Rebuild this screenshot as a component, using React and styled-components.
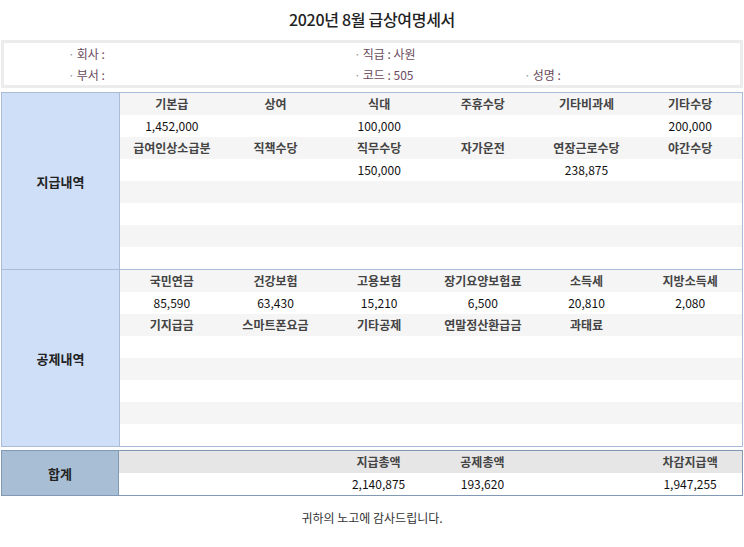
import React from "react";
import styled, { createGlobalStyle } from "styled-components";

const G = createGlobalStyle`
  body{margin:0;background:#fff;font-family:"Noto Sans CJK KR","Noto Sans",sans-serif;font-size:12px;color:#222;}
`;
const Page = styled.div`width:742px;padding:0 0 0 1px;`;
const Title = styled.h1`margin:0;height:40px;line-height:38px;text-align:center;font-size:16px;font-weight:500;color:#222;letter-spacing:-0.3px;`;
const Info = styled.div`border:3px solid #ececec;height:42px;padding:0;display:grid;grid-template-columns:286px 170px 1fr;grid-template-rows:21px 21px;padding-left:64px;margin-bottom:4px;`;
const InfoItem = styled.div`color:#6b4a5c;font-size:12px;line-height:21px;&::before{content:"·";margin-right:2px;color:#999;}`;
const Section = styled.div`display:flex;border:1px solid ${p=>p.$b};margin-top:${p=>p.$mt||0}px;`;
const Label = styled.div`width:117px;flex:none;background:${p=>p.$bg};border-right:1px solid ${p=>p.$b};display:flex;align-items:center;justify-content:center;font-weight:700;font-size:13px;color:#222;`;
const Grid = styled.div`flex:1;display:flex;flex-direction:column;`;
const Row = styled.div`display:grid;grid-template-columns:repeat(6,1fr);height:22px;background:${p=>p.$bg};`;
const Cell = styled.div`text-align:center;line-height:22px;font-size:12px;color:${p=>p.$h?"#444":"#111"};font-weight:${p=>p.$h?700:400};white-space:nowrap;`;

const pay = [
  ["기본급","상여","식대","주휴수당","기타비과세","기타수당"],
  ["1,452,000","","100,000","","","200,000"],
  ["급여인상소급분","직책수당","직무수당","자가운전","연장근로수당","야간수당"],
  ["","","150,000","","238,875",""],
  [],[],[],[],
];
const ded = [
  ["국민연금","건강보험","고용보험","장기요양보험료","소득세","지방소득세"],
  ["85,590","63,430","15,210","6,500","20,810","2,080"],
  ["기지급금","스마트폰요금","기타공제","연말정산환급금","과태료",""],
  [],[],[],[],[],
];

const Block = ({rows}) => (
  <Grid>
    {rows.map((r,i)=>(
      <Row key={i} $bg={i%2===0?"#f5f5f5":"#fff"}>
        {Array.from({length:6}).map((_,j)=><Cell key={j} $h={i%2===0}>{r[j]||""}</Cell>)}
      </Row>
    ))}
  </Grid>
);

const Foot = styled.div`text-align:center;margin-top:13px;font-size:12px;color:#333;`;

export default function App(){
  return (<Page><G/>
    <Title>2020년 8월 급상여명세서</Title>
    <Info>
      <InfoItem>회사 :</InfoItem><InfoItem>직급 : 사원</InfoItem><div/>
      <InfoItem>부서 :</InfoItem><InfoItem>코드 : 505</InfoItem><InfoItem>성명 :</InfoItem>
    </Info>
    <Section $b="#aabdd8">
      <Label $bg="#cfdff7" $b="#aabdd8">지급내역</Label><Block rows={pay}/>
    </Section>
    <Section $b="#aabdd8" style={{borderTop:"none"}}>
      <Label $bg="#cfdff7" $b="#aabdd8">공제내역</Label><Block rows={ded}/>
    </Section>
    <Section $b="#8199b4" $mt={3}>
      <Label $bg="#a8bed4" $b="#8199b4" style={{width:116}}>합계</Label>
      <Grid>
        <Row $bg="#e6e6e6">{["","","지급총액","공제총액","","차감지급액"].map((t,j)=><Cell key={j} $h>{t}</Cell>)}</Row>
        <Row $bg="#fff">{["","","2,140,875","193,620","","1,947,255"].map((t,j)=><Cell key={j}>{t}</Cell>)}</Row>
      </Grid>
    </Section>
    <Foot>귀하의 노고에 감사드립니다.</Foot>
  </Page>);
}
